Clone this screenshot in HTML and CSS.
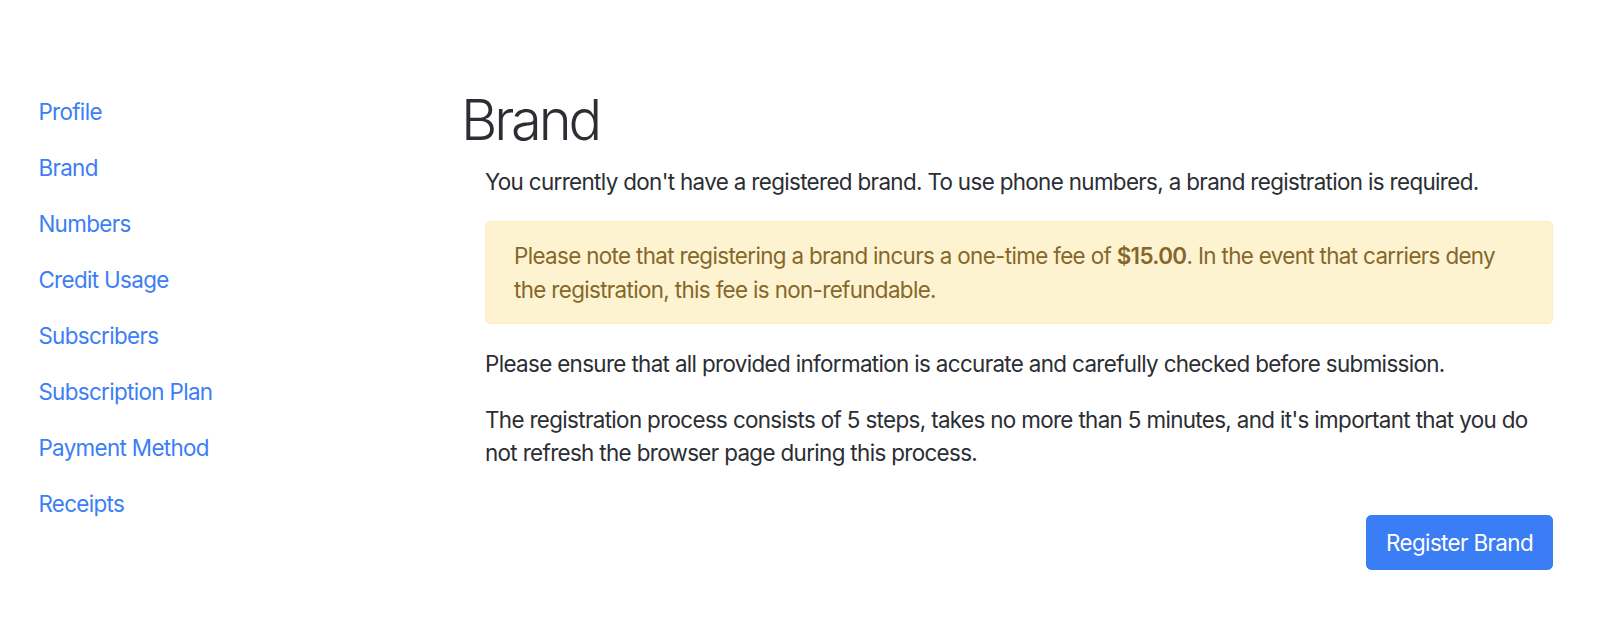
FILE: index.html
```html
<!DOCTYPE html>
<html lang="en">
<head>
    <meta charset="UTF-8">
    <meta name="viewport" content="width=device-width, initial-scale=1.0">
    <title>Brand</title>
    <link rel="stylesheet" href="styles.css">
</head>
<body>
    <div class="page">
        <nav class="sidebar">
            <a class="nav-link" href="#">Profile</a>
            <a class="nav-link" href="#">Brand</a>
            <a class="nav-link" href="#">Numbers</a>
            <a class="nav-link" href="#">Credit Usage</a>
            <a class="nav-link" href="#">Subscribers</a>
            <a class="nav-link" href="#">Subscription Plan</a>
            <a class="nav-link" href="#">Payment Method</a>
            <a class="nav-link" href="#">Receipts</a>
        </nav>

        <main class="content">
            <h1>Brand</h1>
            <div class="brand-body">
                <p>You currently don't have a registered brand. To use phone numbers, a brand registration is required.</p>

                <div class="alert">
                    Please note that registering a brand incurs a one-time fee of <b>$15.00</b>. In the event that carriers deny the registration, this fee is non-refundable.
                </div>

                <p>Please ensure that all provided information is accurate and carefully checked before submission.</p>

                <p>The registration process consists of 5 steps, takes no more than 5 minutes, and it's important that you do not refresh the browser page during this process.</p>

                <div class="actions">
                    <button class="btn">Register Brand</button>
                </div>
            </div>
        </main>
    </div>
</body>
</html>
```

FILE: styles.css
```css
body {
    margin: 0;
    background-color: #ffffff;
    color: #2b2e33;
    font-family: Inter, "Noto Sans", sans-serif;
    font-size: 22.4px;
    line-height: 1.5;
    letter-spacing: -0.65px;
}

.page {
    display: flex;
    padding: 84px 47px 0 16px;
}

/* left menu */
.sidebar {
    display: flex;
    flex-direction: column;
    width: 442px;
    flex-shrink: 0;
}
.nav-link {
    padding: 11.2px 22.4px;
    color: #3b7ef6;
    text-decoration: none;
}

.content {
    flex: 1;
}
h1 {
    font-size: 56px;
    font-weight: 300;
    line-height: 1.2;
    letter-spacing: -3.2px;
    margin: 3px 0 11.2px 3px;
}
.brand-body {
    padding-left: 27px;
}
p {
    margin: 0 0 22.4px 0;
}

.alert {
    padding: 16.8px 28px;
    margin-bottom: 22.4px;
    background-color: #fdf3d1;
    border: 1.4px solid #fcedbb;
    border-radius: 5px;
    color: #85672a;
}
.alert b {
    font-weight: 600;
}

.actions {
    display: flex;
    justify-content: flex-end;
    margin-top: 45px;
}
.btn {
    font-family: inherit;
    font-size: 22.4px;
    line-height: 1.5;
    letter-spacing: -0.62px;
    padding: 9.8px 19px;
    border: 1.4px solid #3a7df5;
    border-radius: 5.25px;
    background-color: #3a7df5;
    color: #ffffff;
    cursor: pointer;
}
```
